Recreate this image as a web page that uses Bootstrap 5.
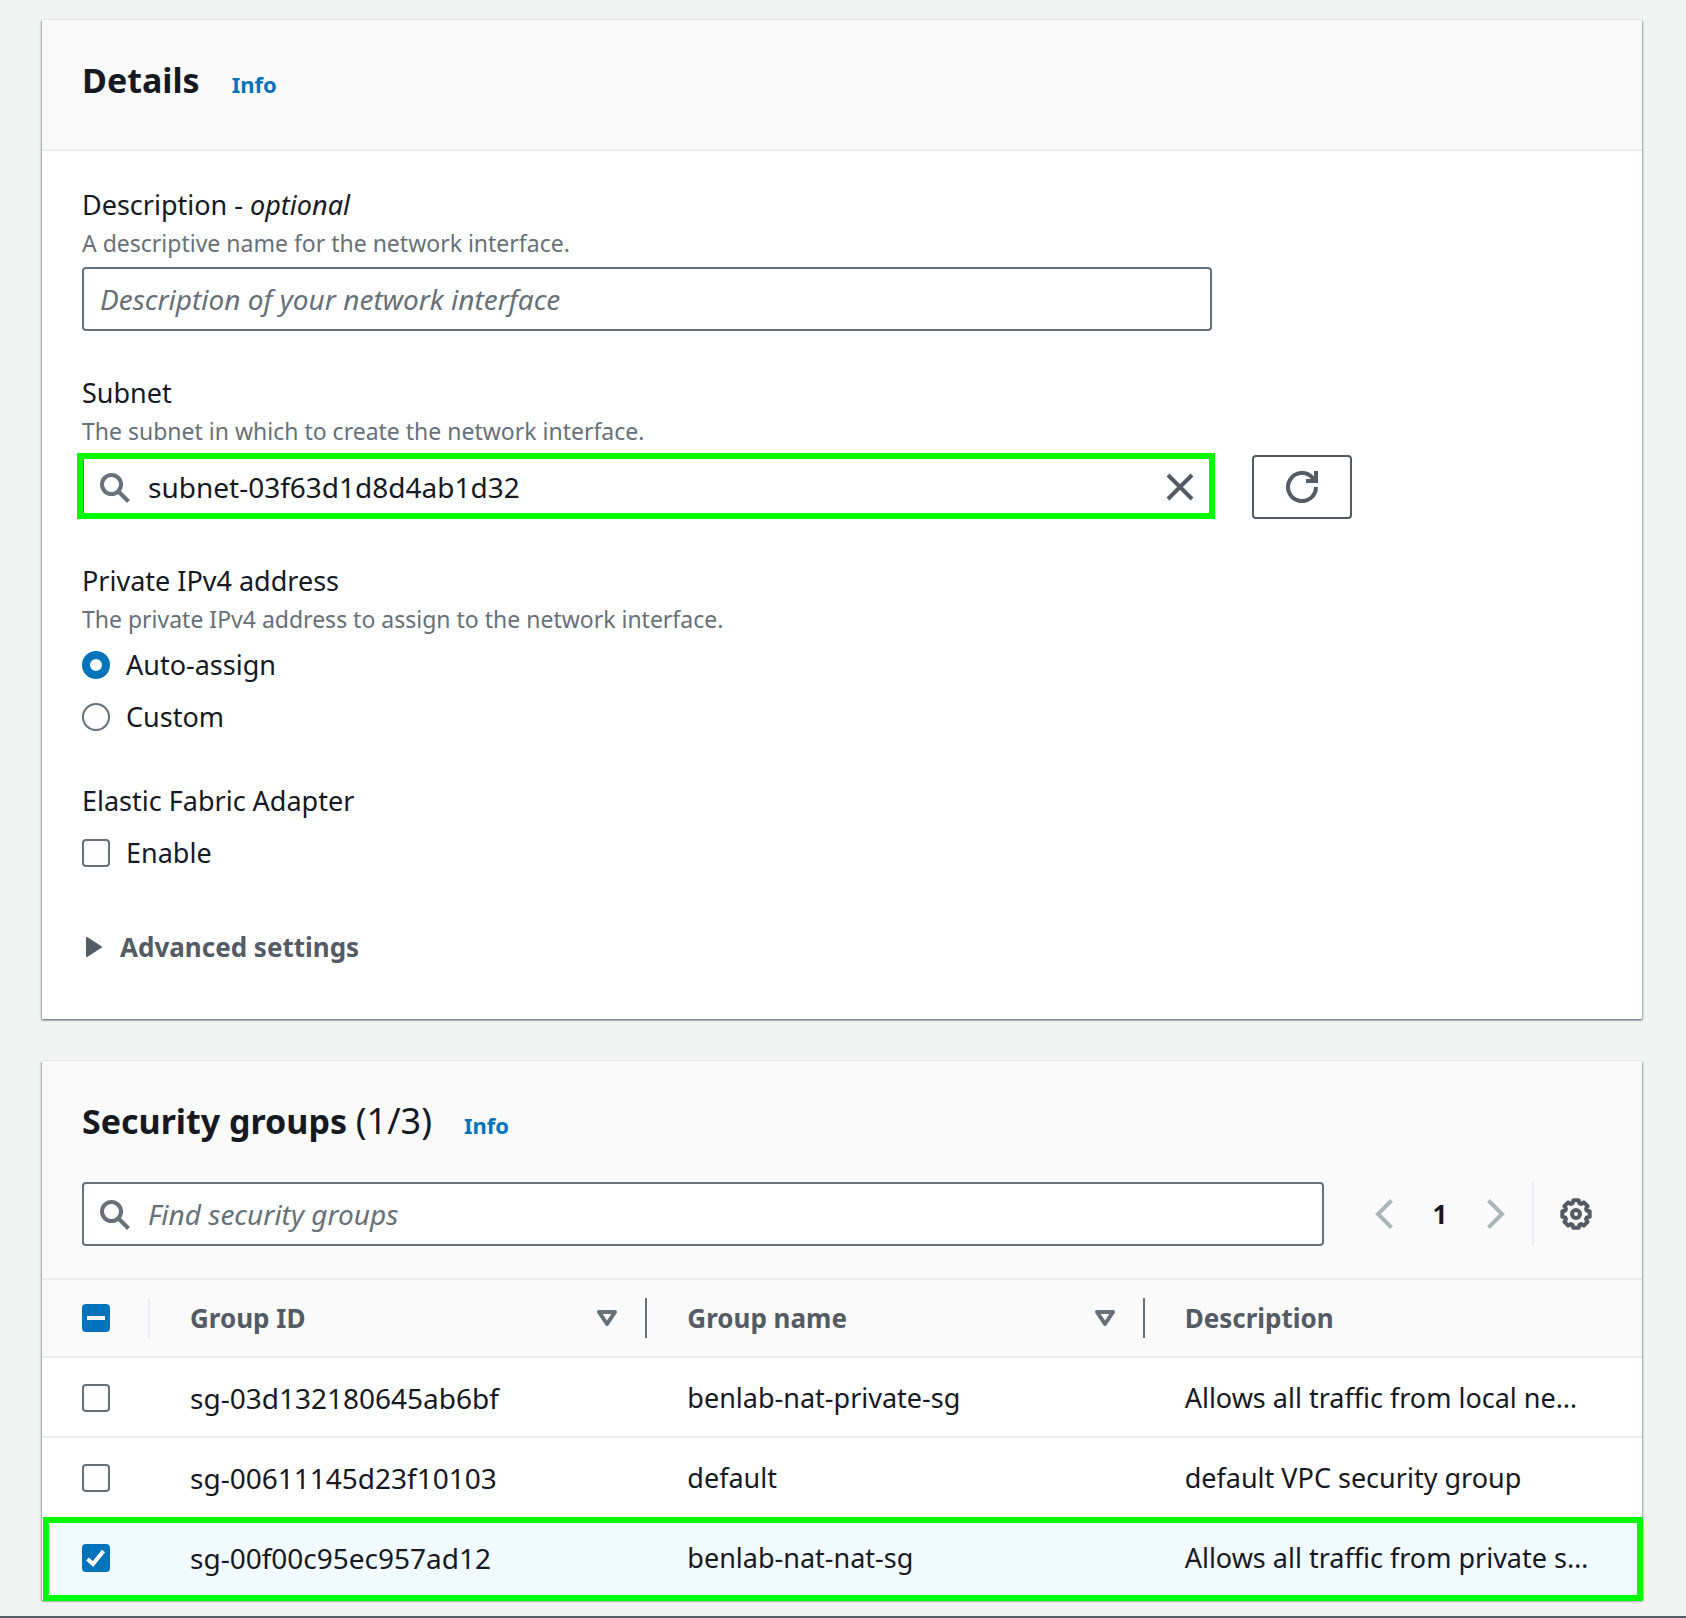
<!DOCTYPE html>
<html lang="en">
<head>
<meta charset="utf-8">
<meta name="viewport" content="width=device-width, initial-scale=1">
<title>Create network interface</title>
<link href="https://cdn.jsdelivr.net/npm/bootstrap@5.3.0/dist/css/bootstrap.min.css" rel="stylesheet">
<style>
  :root { --ink: #16191f; --muted: #687078; --slate: #545b64; --line: #eaeded; --link: #0073bb; --ring: #00ff00; }
  body { background: #f2f3f3; color: var(--ink); font-family: "Noto Sans", "Open Sans", sans-serif; font-size: 27px; line-height: 40px; }
  .page-wrap { padding: 20px 44px 16px 42px; }
  .panel { background: #fff; box-shadow: 0 1px 2px 0 rgba(0,28,36,.5), 1px 1px 2px 0 rgba(0,28,36,.2), -1px 1px 2px 0 rgba(0,28,36,.2); }
  .panel + .panel { margin-top: 42px; }
  .panel-head { background: #fafafa; padding: 36px 40px 0; border-bottom: 2px solid var(--line); }
  .panel-head h2 { font-size: 34px; line-height: 48px; font-weight: 700; }
  .panel-head h2 .tally { font-size: 36px; font-weight: 400; line-height: 40px; }
  .head-plain { padding-bottom: 45px; }
  .head-tools { padding-bottom: 32px; }
  .info-link { color: var(--link); font-size: 22px; line-height: 40px; font-weight: 700; text-decoration: none; }
  .panel-body { padding: 34px 40px 52px; }
  .panel-body .row { --bs-gutter-x: 40px; }
  .field-gap { margin-bottom: 42px; }
  .group-gap { margin-bottom: 44px; }
  .field-label { display: block; font-size: 27px; line-height: 40px; float: none; margin: 0; }
  .hint-text { color: var(--muted); font-size: 23px; line-height: 36px; margin-bottom: 6px; }
  .form-control { height: 64px; border: 2px solid var(--muted); border-radius: 4px; padding: 0 16px; font-size: 28px; line-height: 40px; color: var(--ink); }
  .form-control::placeholder { color: var(--muted); font-style: italic; }
  .with-icon .form-control { padding-left: 64px; }
  .search-icon { position: absolute; left: 17px; top: 17px; color: var(--muted); }
  .clear-btn { position: absolute; right: 17px; top: 17px; color: var(--slate); line-height: 0; }
  .ring-box::after { content: ""; position: absolute; inset: -2px -3px 0 -5px; border: 6px solid var(--ring); pointer-events: none; }
  .refresh-btn { width: 100px; height: 64px; border: 2px solid var(--slate); border-radius: 4px; background: #fff; color: var(--slate); }
  .form-check-input { width: 28px; height: 28px; margin: 0; float: none; flex: none; border: 2px solid var(--muted); background-color: #fff; }
  .form-check-input[type=checkbox] { border-radius: 4px; display: block; }
  .form-check-input[type=checkbox]:checked, .form-check-input[type=checkbox]:indeterminate { background-color: var(--link); border-color: var(--link); background-size: 24px 24px; }
  .form-check-input[type=radio]:checked { background-image: none; border: 8px solid var(--link); background-color: #fff; }
  .form-check-input[type=checkbox]:checked { background-image: url("data:image/svg+xml,%3csvg xmlns='http://www.w3.org/2000/svg' viewBox='0 0 24 24'%3e%3cpath d='M3.5 13l5.5 5L19.5 5' fill='none' stroke='%23fff' stroke-width='4'/%3e%3c/svg%3e"); }
  .form-check-input[type=checkbox]:indeterminate { background-image: url("data:image/svg+xml,%3csvg xmlns='http://www.w3.org/2000/svg' viewBox='0 0 24 24'%3e%3cpath d='M3 12h18' stroke='%23fff' stroke-width='4'/%3e%3c/svg%3e"); }
  .choice { display: flex; align-items: center; gap: 16px; }
  .choices { display: grid; gap: 12px; }
  .adv-toggle { gap: 16px; color: var(--slate); font-weight: 700; margin-top: 54px; line-height: 40px; font-size: 26px; }
  .tools { margin-top: 37px; }
  .pager { margin-left: 48px; }
  .pager .btn { width: 24px; height: 40px; color: #aab7b8; border: 0; }
  .pager .page-no { width: 88px; text-align: center; font-size: 26px; font-weight: 700; }
  .gear-wrap { margin-left: 24px; padding: 0 10px 0 26px; border-left: 2px solid var(--line); height: 64px; color: var(--slate); }
  .sg-table { table-layout: fixed; font-size: 27px; line-height: 40px; color: var(--ink); margin: 0; }
  .sg-table th, .sg-table td { padding: 20px 28px 18px 40px; white-space: nowrap; overflow: hidden; border-bottom: 2px solid var(--line); color: var(--ink); background: none; box-shadow: none; }
  .sg-table .pick { width: 108px; }
  .sg-table .sg-id { font-size: 28px; }
  .sg-table thead th { position: relative; background: #fafafa; color: var(--slate); padding: 18px 29px 18px 40px; font-size: 26px; font-weight: 700; }
  .sg-table thead th:not(:last-child)::after { content: ""; position: absolute; right: 0; top: 18px; height: 40px; width: 2px; background: var(--muted); }
  .sg-table thead th.pick:not(:last-child)::after { background: var(--line); }
  .sg-table tbody .before-picked td { border-bottom-color: transparent; }
  .sg-table tbody .picked td { background: #f1faff; border: 0; padding-bottom: 22px; }
  .picked-ring { position: relative; }
  .picked-ring::after { content: ""; position: absolute; left: 1px; right: -1px; bottom: -1px; height: 84px; border: 6px solid var(--ring); pointer-events: none; }
  .page-foot { height: 2px; background: var(--slate); }
</style>
<script src="https://cdn.jsdelivr.net/npm/bootstrap@5.3.0/dist/js/bootstrap.bundle.min.js"></script>
</head>
<body>
<main class="page-wrap">
  <section class="panel">
    <header class="panel-head head-plain">
      <div class="d-flex align-items-baseline gap-4">
        <h2 class="mb-0 me-2">Details</h2>
        <a class="info-link" href="#">Info</a>
      </div>
    </header>
    <form class="panel-body">
      <div class="row field-gap">
        <div class="col-9">
          <label class="field-label" for="desc">Description - <em>optional</em></label>
          <div class="hint-text">A descriptive name for the network interface.</div>
          <input class="form-control" id="desc" type="text" placeholder="Description of your network interface">
        </div>
      </div>
      <div class="row field-gap align-items-end">
        <div class="col-9">
          <label class="field-label" for="subnet">Subnet</label>
          <div class="hint-text">The subnet in which to create the network interface.</div>
          <div class="position-relative with-icon ring-box">
            <svg class="search-icon" width="32" height="32" viewBox="0 0 32 32" fill="none" stroke="currentColor" stroke-width="4" aria-hidden="true"><circle cx="12.500" cy="12.500" r="9.500"/><path d="M19.500 19.500L29.500 29.500"/></svg>
            <input class="form-control" id="subnet" type="text" value="subnet-03f63d1d8d4ab1d32">
            <button class="clear-btn btn p-0 border-0" type="button" aria-label="Clear"><svg width="30" height="30" viewBox="0 0 30 30" fill="none" stroke="currentColor" stroke-width="4" aria-hidden="true"><path d="M3 3L27 27M27 3L3 27"/></svg></button>
          </div>
        </div>
        <div class="col-3">
          <button class="refresh-btn btn p-0 d-flex align-items-center justify-content-center" type="button" aria-label="Refresh"><svg width="32" height="32" viewBox="0 0 32 32" fill="none" stroke="currentColor" stroke-width="4" aria-hidden="true"><path d="M30 16A14 14 0 1 1 26.500 6.800L29 10M30 0V10H20"/></svg></button>
        </div>
      </div>
      <fieldset>
        <legend class="field-label">Private IPv4 address</legend>
        <div class="hint-text mb-2">The private IPv4 address to assign to the network interface.</div>
        <div class="choices group-gap">
          <div class="choice"><input class="form-check-input" type="radio" name="ip" id="auto" checked><label for="auto">Auto-assign</label></div>
          <div class="choice"><input class="form-check-input" type="radio" name="ip" id="custom"><label for="custom">Custom</label></div>
        </div>
      </fieldset>
      <fieldset class="choices">
        <legend class="field-label mb-2 pb-1">Elastic Fabric Adapter</legend>
        <div class="choice"><input class="form-check-input" type="checkbox" id="efa"><label for="efa">Enable</label></div>
      </fieldset>
      <button class="adv-toggle btn border-0 p-0 d-flex align-items-center" type="button" aria-expanded="false"><svg width="22" height="24" viewBox="0 0 22 24" aria-hidden="true"><path d="M5 3L19 12L5 21Z" fill="currentColor" stroke="currentColor" stroke-width="2" stroke-linejoin="round"/></svg>Advanced settings</button>
    </form>
  </section>

  <section class="panel picked-ring">
    <header class="panel-head head-tools">
      <div class="d-flex align-items-baseline gap-4">
        <h2 class="mb-0 me-2">Security groups <span class="tally">(1/3)</span></h2>
        <a class="info-link" href="#">Info</a>
      </div>
      <div class="tools d-flex align-items-center">
        <div class="position-relative with-icon flex-grow-1">
          <svg class="search-icon" width="32" height="32" viewBox="0 0 32 32" fill="none" stroke="currentColor" stroke-width="4" aria-hidden="true"><circle cx="12.500" cy="12.500" r="9.500"/><path d="M19.500 19.500L29.500 29.500"/></svg>
          <input class="form-control" type="search" placeholder="Find security groups" aria-label="Find security groups">
        </div>
        <nav class="pager d-flex align-items-center" aria-label="Pages">
          <button class="btn p-0 d-flex align-items-center justify-content-center" type="button" aria-label="Previous page"><svg width="20" height="32" viewBox="0 0 20 32" fill="none" stroke="currentColor" stroke-width="4" aria-hidden="true"><path d="M17.500 2.500L4 16L17.500 29.500"/></svg></button>
          <span class="page-no">1</span>
          <button class="btn p-0 d-flex align-items-center justify-content-center" type="button" aria-label="Next page"><svg width="20" height="32" viewBox="0 0 20 32" fill="none" stroke="currentColor" stroke-width="4" aria-hidden="true"><path d="M2.500 2.500L16 16L2.500 29.500"/></svg></button>
        </nav>
        <div class="gear-wrap d-flex align-items-center">
          <button class="btn p-0 border-0 d-flex" type="button" aria-label="Preferences"><svg width="32" height="32" viewBox="-16 -16 32 32" fill="none" stroke="#545b64" stroke-width="4" stroke-linejoin="round" aria-hidden="true"><path d="M-2.700-13.700L2.700-13.700L3.400-10.800L5.200-10L7.800-11.600L11.600-7.800L10-5.200L10.800-3.400L13.700-2.700L13.700 2.700L10.800 3.400L10 5.200L11.600 7.800L7.800 11.600L5.200 10L3.400 10.800L2.700 13.700L-2.700 13.700L-3.400 10.800L-5.200 10L-7.800 11.600L-11.600 7.800L-10 5.200L-10.800 3.400L-13.700 2.700L-13.700-2.700L-10.800-3.400L-10-5.200L-11.600-7.800L-7.800-11.600L-5.200-10L-3.400-10.800Z"/><circle r="4"/></svg></button>
        </div>
      </div>
    </header>
    <table class="table sg-table">
      <thead>
        <tr>
          <th class="pick align-middle" scope="col"><input class="form-check-input" type="checkbox" id="pick-all" aria-label="Select all"></th>
          <th scope="col"><div class="d-flex justify-content-between align-items-center">Group ID<svg width="22" height="18" viewBox="0 0 22 18" fill="none" stroke="#687078" stroke-width="4" stroke-linejoin="round" aria-hidden="true"><path d="M3 3H19L11 15Z"/></svg></div></th>
          <th scope="col"><div class="d-flex justify-content-between align-items-center">Group name<svg width="22" height="18" viewBox="0 0 22 18" fill="none" stroke="#687078" stroke-width="4" stroke-linejoin="round" aria-hidden="true"><path d="M3 3H19L11 15Z"/></svg></div></th>
          <th scope="col">Description</th>
        </tr>
      </thead>
      <tbody>
        <tr>
          <td class="align-middle"><input class="form-check-input" type="checkbox" aria-label="Select sg-03d132180645ab6bf"></td>
          <td class="sg-id">sg-03d132180645ab6bf</td><td>benlab-nat-private-sg</td><td>Allows all traffic from local ne…</td>
        </tr>
        <tr class="before-picked">
          <td class="align-middle"><input class="form-check-input" type="checkbox" aria-label="Select sg-00611145d23f10103"></td>
          <td class="sg-id">sg-00611145d23f10103</td><td>default</td><td>default VPC security group</td>
        </tr>
        <tr class="picked">
          <td class="align-middle"><input class="form-check-input" type="checkbox" checked aria-label="Select sg-00f00c95ec957ad12"></td>
          <td class="sg-id">sg-00f00c95ec957ad12</td><td>benlab-nat-nat-sg</td><td>Allows all traffic from private s…</td>
        </tr>
      </tbody>
    </table>
  </section>
</main>
<footer class="page-foot"></footer>
<script>document.getElementById('pick-all').indeterminate = true;</script>
</body>
</html>
